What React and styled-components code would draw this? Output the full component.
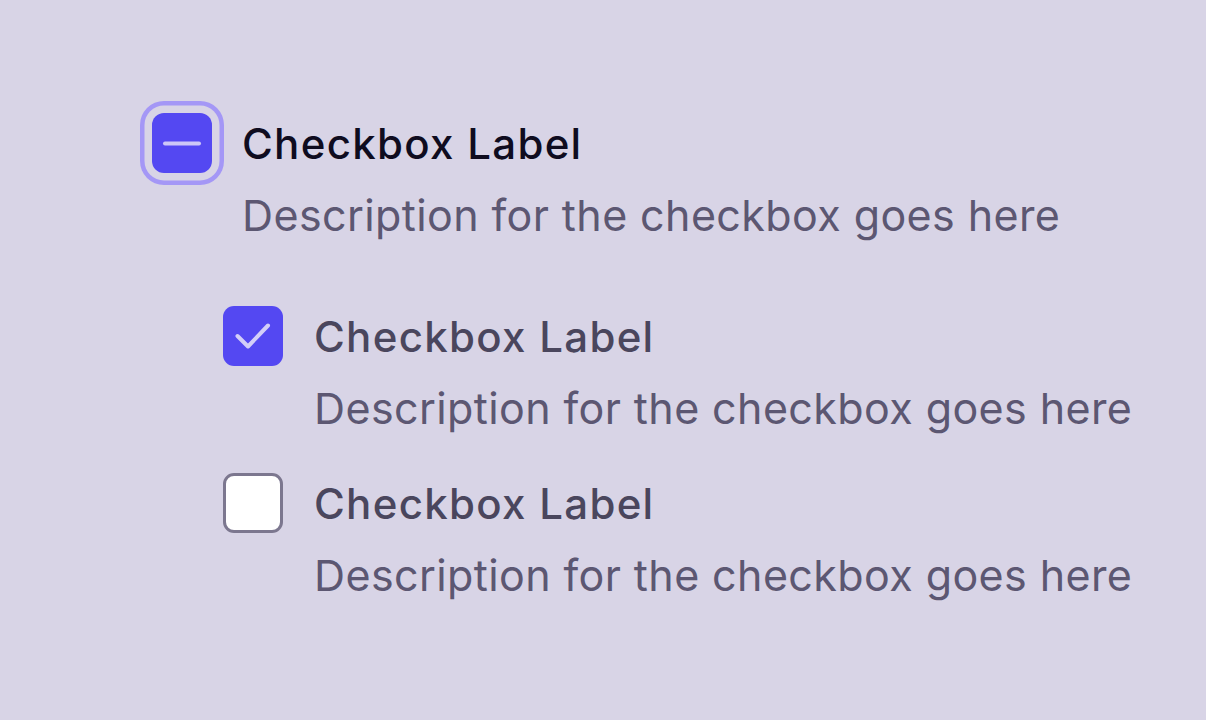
import React from "react";
import styled, { createGlobalStyle } from "styled-components";

const GlobalStyle = createGlobalStyle`
  html, body {
    margin: 0;
    padding: 0;
    background: #d8d4e6;
  }
  body {
    font-family: Inter, "Open Sans", sans-serif;
  }
`;

const Page = styled.div`
  min-height: 100vh;
  box-sizing: border-box;
  padding: 113px 0 0 152px;
  background: #d8d4e6;
`;

const Item = styled.div`
  display: grid;
  grid-template-columns: 60px auto;
  column-gap: ${(p) => (p.$nested ? "31px" : "30px")};
  justify-content: start;
  margin-top: ${(p) => p.$top || 0}px;
`;

const Box = styled.div`
  width: 60px;
  height: 60px;
  box-sizing: border-box;
  border-radius: ${(p) => (p.$parent ? "12px" : "11px")};
  display: flex;
  align-items: center;
  justify-content: center;
  background: ${(p) => (p.$checked ? "#5448f2" : "#ffffff")};
  border: ${(p) => (p.$checked ? "none" : "3px solid #7c778f")};
  box-shadow: ${(p) =>
    p.$focus ? "0 0 0 7.5px #d8d4e6, 0 0 0 12px #a497f6" : "none"};
`;

const Label = styled.span`
  font-size: 42px;
  font-weight: 500;
  line-height: 60px;
  margin-top: 1px;
  letter-spacing: 1.3px;
  color: ${(p) => (p.$strong ? "#0f0c1f" : "#4a465d")};
  white-space: nowrap;
`;

const Description = styled.span`
  grid-column: 2;
  font-size: 43px;
  font-weight: 400;
  line-height: 52px;
  margin-top: 15px;
  letter-spacing: 0.4px;
  color: #5c5772;
  white-space: nowrap;
`;

const Children = styled.div`
  padding-left: 71px;
  margin-top: 65px;
`;

function MinusIcon() {
  return (
    <svg width="60" height="60" viewBox="0 0 60 60">
      <path d="M13 30.5H47" stroke="#cdc7f7" strokeWidth="4" strokeLinecap="round" />
    </svg>
  );
}

function CheckIcon() {
  return (
    <svg width="60" height="60" viewBox="0 0 60 60">
      <path
        d="M14.5 30L25 40.5L45 19.5"
        fill="none"
        stroke="#d3cef8"
        strokeWidth="4"
        strokeLinecap="round"
        strokeLinejoin="round"
      />
    </svg>
  );
}

const description = "Description for the checkbox goes here";

export default function App() {
  return (
    <>
      <GlobalStyle />
      <Page>
        <Item>
          <Box $checked $focus $parent>
            <MinusIcon />
          </Box>
          <Label $strong>Checkbox Label</Label>
          <Description>{description}</Description>
        </Item>
        <Children>
          <Item $nested>
            <Box $checked>
              <CheckIcon />
            </Box>
            <Label>Checkbox Label</Label>
            <Description>{description}</Description>
          </Item>
          <Item $nested $top={39}>
            <Box />
            <Label>Checkbox Label</Label>
            <Description>{description}</Description>
          </Item>
        </Children>
      </Page>
    </>
  );
}
